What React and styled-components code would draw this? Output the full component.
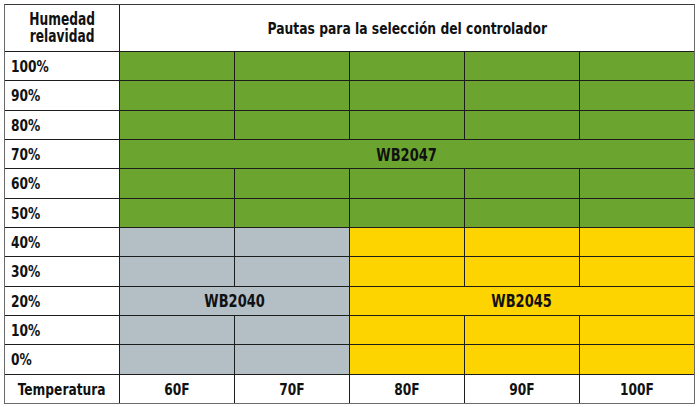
import styled, { createGlobalStyle } from "styled-components";

const GlobalStyle = createGlobalStyle`
  html, body {
    margin: 0;
    padding: 0;
    background: #ffffff;
  }
  body {
    font-family: "Liberation Sans Narrow", "DejaVu Sans Condensed", "Liberation Sans", sans-serif;
    font-weight: bold;
    color: #111;
  }
`;

const Page = styled.div`
  width: 700px;
  height: 407px;
  padding: 4px 5px 3px 4px;
  box-sizing: border-box;
`;

const Table = styled.div`
  display: grid;
  grid-template-columns: repeat(6, 1fr);
  grid-template-rows: 46px repeat(12, 1fr);
  gap: 1px;
  height: 400px;
  box-sizing: border-box;
  background: #1d1d1d;
  border: 1px solid #6a6a6a;
  border-top-color: #3a3a3a;
`;

const Cell = styled.div`
  display: flex;
  align-items: center;
  justify-content: ${(p) => (p.$left ? "flex-start" : "center")};
  padding: ${(p) => (p.$left ? "1px 0 0 6px" : "1px 0 0")};
  grid-column: span ${(p) => p.$span || 1};
  background: ${(p) => p.$bg || "#ffffff"};
  font-size: ${(p) => p.$size || 16}px;
  overflow: hidden;
`;

// the reference type is a condensed grotesque, squeeze the fallback to match
const Narrow = styled.span`
  display: inline-block;
  white-space: nowrap;
  transform: scaleX(${(p) => p.$sx || 0.85});
  transform-origin: ${(p) => (p.$left ? "left center" : "center")};
`;

const HeadLabel = styled(Narrow)`
  display: flex;
  flex-direction: column;
  align-items: center;
  line-height: 17px;
  margin-top: -1px;
`;

const GREEN = "#6ba52f";
const GRAY = "#b3bec5";
const YELLOW = "#fdd400";

const greenRow = [{ bg: GREEN }, { bg: GREEN }, { bg: GREEN }, { bg: GREEN }, { bg: GREEN }];
const lowRow = [{ bg: GRAY }, { bg: GRAY }, { bg: YELLOW }, { bg: YELLOW }, { bg: YELLOW }];

const rows = [
  { label: "100%", cells: greenRow },
  { label: "90%", cells: greenRow },
  { label: "80%", cells: greenRow },
  { label: "70%", cells: [{ span: 5, bg: GREEN, text: "WB2047" }] },
  { label: "60%", cells: greenRow },
  { label: "50%", cells: greenRow },
  { label: "40%", cells: lowRow },
  { label: "30%", cells: lowRow },
  {
    label: "20%",
    cells: [
      { span: 2, bg: GRAY, text: "WB2040" },
      { span: 3, bg: YELLOW, text: "WB2045" },
    ],
  },
  { label: "10%", cells: lowRow },
  { label: "0%", cells: lowRow },
];

const temps = ["60F", "70F", "80F", "90F", "100F"];

export default function App() {
  return (
    <Page>
      <GlobalStyle />
      <Table>
        <Cell $size={17}>
          <HeadLabel $sx={0.8}>
            <span>Humedad</span>
            <span>relavidad</span>
          </HeadLabel>
        </Cell>
        <Cell $span={5} $size={16.5}>
          <Narrow $sx={0.83}>Pautas para la selección del controlador</Narrow>
        </Cell>
        {rows.map((row) => [
          <Cell key={row.label} $left>
            <Narrow $left>{row.label}</Narrow>
          </Cell>,
          ...row.cells.map((c, i) => (
            <Cell key={row.label + i} $span={c.span} $bg={c.bg} $size={17}>
              {c.text && <Narrow>{c.text}</Narrow>}
            </Cell>
          )),
        ])}
        <Cell>
          <Narrow>Temperatura</Narrow>
        </Cell>
        {temps.map((t) => (
          <Cell key={t}>
            <Narrow>{t}</Narrow>
          </Cell>
        ))}
      </Table>
    </Page>
  );
}
